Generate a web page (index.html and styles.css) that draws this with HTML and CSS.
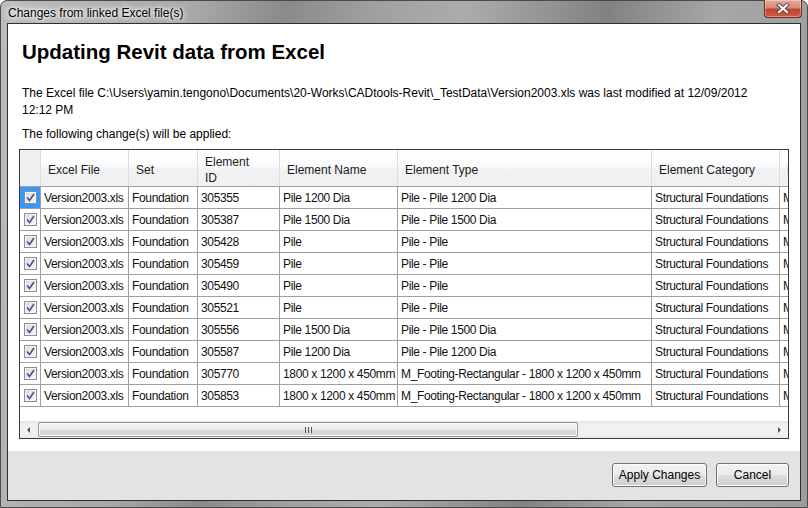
FILE: index.html
```html
<!DOCTYPE html>
<html lang="en">
<head>
    <meta charset="UTF-8">
    <title>Changes from linked Excel file(s)</title>
    <link rel="stylesheet" href="styles.css">
</head>
<body>
    <div class="window">
        <div class="titlebar">
            <span class="title">Changes from linked Excel file(s)</span>
            <button class="close" title="Close">
                <svg width="14" height="11" viewBox="0 0 14 11">
                    <path d="M3 2 L11 9 M11 2 L3 9" stroke="#5c4a48" stroke-width="4" stroke-linecap="square"/>
                    <path d="M3 2 L11 9 M11 2 L3 9" stroke="#fff" stroke-width="2" stroke-linecap="square"/>
                </svg>
            </button>
        </div>
        <div class="client">
            <div class="content">
                <h1>Updating Revit data from Excel</h1>
                <p class="info">The Excel file C:\Users\yamin.tengono\Documents\20-Works\CADtools-Revit\_TestData\Version2003.xls was last modified at 12/09/2012<br>12:12 PM</p>
                <p class="info note">The following change(s) will be applied:</p>

                <div class="grid">
                    <div class="grid-body">
                        <div class="row head">
                            <div class="cell"></div>
                            <div class="cell">Excel File</div>
                            <div class="cell">Set</div>
                            <div class="cell">Element<br>ID</div>
                            <div class="cell">Element Name</div>
                            <div class="cell">Element Type</div>
                            <div class="cell">Element Category</div>
                            <div class="cell">Material</div>
                        </div>

                        <div class="row">
                            <div class="cell check focus"><span class="cb"><svg width="9" height="9" viewBox="0 0 9 9"><path d="M1 4.5 L3.5 7.5 L8 1" stroke="#3b5595" stroke-width="1.6" fill="none"/></svg></span></div>
                            <div class="cell">Version2003.xls</div>
                            <div class="cell">Foundation</div>
                            <div class="cell">305355</div>
                            <div class="cell">Pile 1200 Dia</div>
                            <div class="cell">Pile - Pile 1200 Dia</div>
                            <div class="cell">Structural Foundations</div>
                            <div class="cell">M</div>
                        </div>
                        <div class="row">
                            <div class="cell check"><span class="cb"><svg width="9" height="9" viewBox="0 0 9 9"><path d="M1 4.5 L3.5 7.5 L8 1" stroke="#3b5595" stroke-width="1.6" fill="none"/></svg></span></div>
                            <div class="cell">Version2003.xls</div>
                            <div class="cell">Foundation</div>
                            <div class="cell">305387</div>
                            <div class="cell">Pile 1500 Dia</div>
                            <div class="cell">Pile - Pile 1500 Dia</div>
                            <div class="cell">Structural Foundations</div>
                            <div class="cell">M</div>
                        </div>
                        <div class="row">
                            <div class="cell check"><span class="cb"><svg width="9" height="9" viewBox="0 0 9 9"><path d="M1 4.5 L3.5 7.5 L8 1" stroke="#3b5595" stroke-width="1.6" fill="none"/></svg></span></div>
                            <div class="cell">Version2003.xls</div>
                            <div class="cell">Foundation</div>
                            <div class="cell">305428</div>
                            <div class="cell">Pile</div>
                            <div class="cell">Pile - Pile</div>
                            <div class="cell">Structural Foundations</div>
                            <div class="cell">M</div>
                        </div>
                        <div class="row">
                            <div class="cell check"><span class="cb"><svg width="9" height="9" viewBox="0 0 9 9"><path d="M1 4.5 L3.5 7.5 L8 1" stroke="#3b5595" stroke-width="1.6" fill="none"/></svg></span></div>
                            <div class="cell">Version2003.xls</div>
                            <div class="cell">Foundation</div>
                            <div class="cell">305459</div>
                            <div class="cell">Pile</div>
                            <div class="cell">Pile - Pile</div>
                            <div class="cell">Structural Foundations</div>
                            <div class="cell">M</div>
                        </div>
                        <div class="row">
                            <div class="cell check"><span class="cb"><svg width="9" height="9" viewBox="0 0 9 9"><path d="M1 4.5 L3.5 7.5 L8 1" stroke="#3b5595" stroke-width="1.6" fill="none"/></svg></span></div>
                            <div class="cell">Version2003.xls</div>
                            <div class="cell">Foundation</div>
                            <div class="cell">305490</div>
                            <div class="cell">Pile</div>
                            <div class="cell">Pile - Pile</div>
                            <div class="cell">Structural Foundations</div>
                            <div class="cell">M</div>
                        </div>
                        <div class="row">
                            <div class="cell check"><span class="cb"><svg width="9" height="9" viewBox="0 0 9 9"><path d="M1 4.5 L3.5 7.5 L8 1" stroke="#3b5595" stroke-width="1.6" fill="none"/></svg></span></div>
                            <div class="cell">Version2003.xls</div>
                            <div class="cell">Foundation</div>
                            <div class="cell">305521</div>
                            <div class="cell">Pile</div>
                            <div class="cell">Pile - Pile</div>
                            <div class="cell">Structural Foundations</div>
                            <div class="cell">M</div>
                        </div>
                        <div class="row">
                            <div class="cell check"><span class="cb"><svg width="9" height="9" viewBox="0 0 9 9"><path d="M1 4.5 L3.5 7.5 L8 1" stroke="#3b5595" stroke-width="1.6" fill="none"/></svg></span></div>
                            <div class="cell">Version2003.xls</div>
                            <div class="cell">Foundation</div>
                            <div class="cell">305556</div>
                            <div class="cell">Pile 1500 Dia</div>
                            <div class="cell">Pile - Pile 1500 Dia</div>
                            <div class="cell">Structural Foundations</div>
                            <div class="cell">M</div>
                        </div>
                        <div class="row">
                            <div class="cell check"><span class="cb"><svg width="9" height="9" viewBox="0 0 9 9"><path d="M1 4.5 L3.5 7.5 L8 1" stroke="#3b5595" stroke-width="1.6" fill="none"/></svg></span></div>
                            <div class="cell">Version2003.xls</div>
                            <div class="cell">Foundation</div>
                            <div class="cell">305587</div>
                            <div class="cell">Pile 1200 Dia</div>
                            <div class="cell">Pile - Pile 1200 Dia</div>
                            <div class="cell">Structural Foundations</div>
                            <div class="cell">M</div>
                        </div>
                        <div class="row">
                            <div class="cell check"><span class="cb"><svg width="9" height="9" viewBox="0 0 9 9"><path d="M1 4.5 L3.5 7.5 L8 1" stroke="#3b5595" stroke-width="1.6" fill="none"/></svg></span></div>
                            <div class="cell">Version2003.xls</div>
                            <div class="cell">Foundation</div>
                            <div class="cell">305770</div>
                            <div class="cell">1800 x 1200 x 450mm</div>
                            <div class="cell">M_Footing-Rectangular - 1800 x 1200 x 450mm</div>
                            <div class="cell">Structural Foundations</div>
                            <div class="cell">M</div>
                        </div>
                        <div class="row">
                            <div class="cell check"><span class="cb"><svg width="9" height="9" viewBox="0 0 9 9"><path d="M1 4.5 L3.5 7.5 L8 1" stroke="#3b5595" stroke-width="1.6" fill="none"/></svg></span></div>
                            <div class="cell">Version2003.xls</div>
                            <div class="cell">Foundation</div>
                            <div class="cell">305853</div>
                            <div class="cell">1800 x 1200 x 450mm</div>
                            <div class="cell">M_Footing-Rectangular - 1800 x 1200 x 450mm</div>
                            <div class="cell">Structural Foundations</div>
                            <div class="cell">M</div>
                        </div>
                    </div>

                    <!-- horizontal scrollbar -->
                    <div class="hscroll">
                        <div class="arrow"><span class="tri left"></span></div>
                        <div class="track">
                            <div class="thumb"><span class="grip"></span></div>
                        </div>
                        <div class="arrow"><span class="tri right"></span></div>
                    </div>
                </div>
            </div>
            <div class="footer">
                <button class="btn btn-apply">Apply Changes</button>
                <button class="btn btn-cancel">Cancel</button>
            </div>
        </div>
    </div>
</body>
</html>
```

FILE: styles.css
```css
body {
    margin: 0;
    padding: 0;
    font-family: "Liberation Sans", Arial, sans-serif;
    font-size: 12px;
    color: #000;
    background: #fff;
}
.window {
    width: 808px;
    height: 508px;
    box-sizing: border-box;
    display: flex;
    flex-direction: column;
    padding: 0 6px 6px 6px;
    border: 1px solid #4a4a4a;
    border-radius: 7px 7px 0 0;
    background: linear-gradient(100deg, #bcbcbc 0%, #a8a8a8 22%, #8a8a8a 32%, #a0a0a0 42%, #acacac 52%, #828282 68%, #a6a6a6 80%, #9c9c9c 100%);
}
.titlebar {
    height: 22px;
    display: flex;
    justify-content: space-between;
    align-items: flex-start;
}
.title {
    padding: 5px 0 0 1px;
    line-height: 15px;
    color: #000;
    text-shadow: 0 0 6px #fff, 0 0 10px #fff, 0 0 3px #fff;
}
.close {
    width: 38px;
    height: 18px;
    margin: -1px -1px 0 0;
    padding: 0;
    display: flex;
    align-items: center;
    justify-content: center;
    border: 1px solid #6a2b20;
    border-top: none;
    border-radius: 0 0 4px 4px;
    background: linear-gradient(#e6a89c 0%, #d58a79 45%, #c0452c 55%, #cc5d45 100%);
    box-shadow: inset 0 0 0 1px rgba(255, 255, 255, 0.35);
}
.client {
    flex: 1;
    display: flex;
    flex-direction: column;
    border: 1px solid #2f2f2f;
    background: #fff;
}
.content {
    flex: 1;
    padding: 0 11px;
}
h1 {
    margin: 14px 0 0 3px;
    font-size: 20.5px;
    line-height: 28px;
    font-weight: bold;
}
.info {
    margin: 19px 0 0 3px;
    line-height: 17px;
}
.note {
    margin-top: 7px;
}

/* data grid */
.grid {
    margin-top: 6px;
    height: 290px;
    box-sizing: border-box;
    border: 1px solid #3a3a3a;
    display: flex;
    flex-direction: column;
}
.grid-body {
    flex: 1;
    overflow: hidden;
}
.row {
    display: grid;
    grid-template-columns: 21px 88px 69px 82px 118px 254px 128px 140px;
    width: 900px;
    height: 22px;
    box-sizing: border-box;
    border-bottom: 1px solid #a0a0a0;
}
.cell {
    box-sizing: border-box;
    border-right: 1px solid #a0a0a0;
    padding: 1px 0 0 3px;
    line-height: 21px;
    letter-spacing: -0.35px;
    white-space: nowrap;
    overflow: hidden;
    color: #111;
}
.row.head {
    height: 37px;
    background: linear-gradient(#ffffff 0%, #f9fafb 45%, #f1f2f3 55%, #eef0f1 100%);
}
.head .cell {
    display: flex;
    align-items: center;
    padding: 3px 0 0 7px;
    line-height: 16px;
    letter-spacing: 0;
    border-right-color: #dcdcdc;
    color: #1b1b1b;
}
.head .cell:first-child {
    background: #eef0f2;
}
.check {
    display: flex;
    align-items: center;
    justify-content: center;
    padding: 0;
}
.focus {
    background: #3399ff;
}
.cb {
    width: 13px;
    height: 13px;
    box-sizing: border-box;
    display: flex;
    align-items: center;
    justify-content: center;
    border: 1px solid #8e8f8f;
    background: linear-gradient(135deg, #dadbdc, #f6f6f6);
    box-shadow: inset 0 0 0 1px #f4f4f4;
}

/* scrollbar */
.hscroll {
    height: 17px;
    display: flex;
    background: linear-gradient(#e4e4e4 0%, #f1f1f1 25%, #f1f1f1 75%, #e9e9e9 100%);
}
.arrow {
    width: 17px;
    display: flex;
    align-items: center;
    justify-content: center;
}
.tri {
    width: 0;
    height: 0;
    border-top: 3px solid transparent;
    border-bottom: 3px solid transparent;
}
.tri.left {
    border-right: 3px solid #555;
}
.tri.right {
    border-left: 3px solid #555;
}
.track {
    flex: 1;
    padding: 1px 0 1px 1px;
}
.thumb {
    width: 540px;
    height: 15px;
    box-sizing: border-box;
    border: 1px solid #979797;
    border-radius: 2px;
    background: linear-gradient(#f5f5f5 0%, #ebebeb 50%, #dbdbdb 51%, #d4d4d4 100%);
    box-shadow: inset 0 0 0 1px #f8f8f8;
    display: flex;
    align-items: center;
    justify-content: center;
}
.grip {
    width: 7px;
    height: 6px;
    background: repeating-linear-gradient(90deg, #555 0, #555 1px, transparent 1px, transparent 3px);
}

/* footer */
.footer {
    height: 49px;
    box-sizing: border-box;
    background: #e3e3e3;
    display: flex;
    justify-content: flex-end;
    gap: 9px;
    padding: 12px 11px 0 0;
}
.btn {
    height: 24px;
    padding: 0;
    font-family: "Liberation Sans", Arial, sans-serif;
    font-size: 12px;
    color: #000;
    border: 1px solid #707070;
    border-radius: 3px;
    background: linear-gradient(#f2f2f2 0%, #ebebeb 50%, #dddddd 51%, #cfcfcf 100%);
    box-shadow: inset 0 0 0 1px #fbfbfb;
}
.btn-apply {
    width: 95px;
}
.btn-cancel {
    width: 73px;
}
```
